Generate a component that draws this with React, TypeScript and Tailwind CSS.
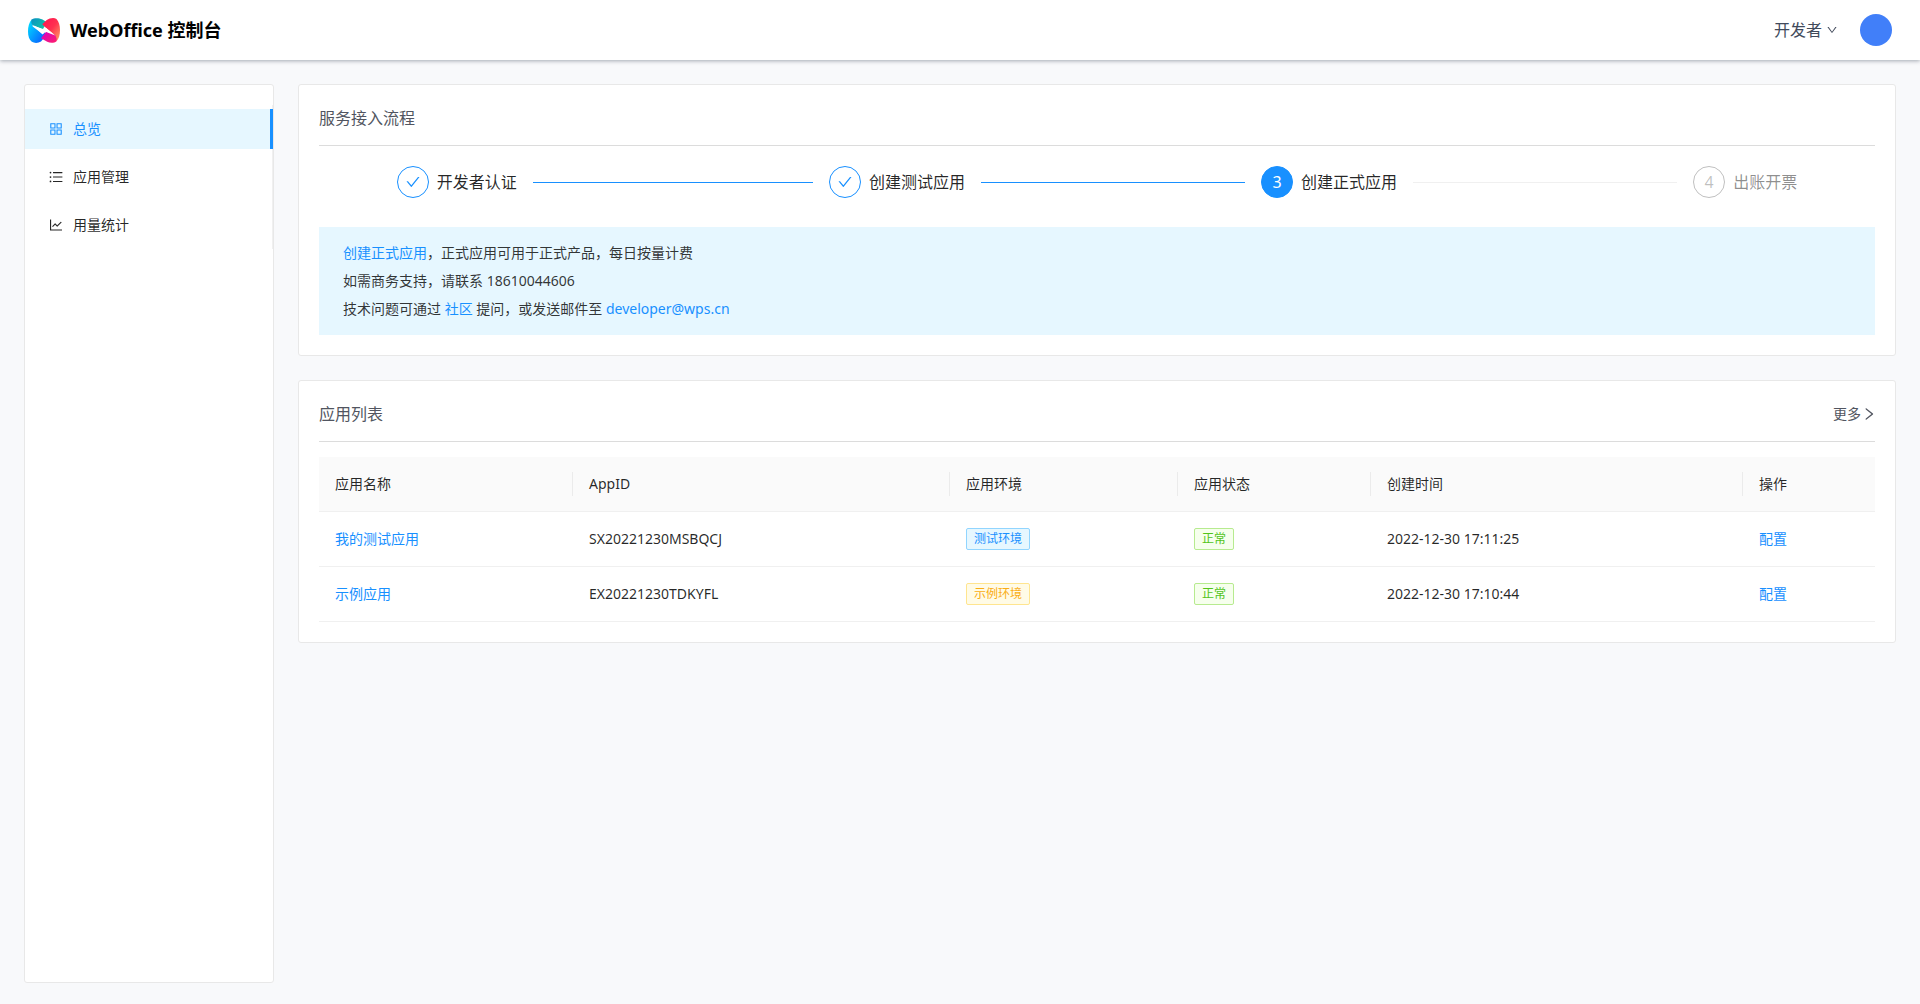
import type { ReactNode } from 'react';
import type { IconType } from 'react-icons';
import {
  AiOutlineAppstore,
  AiOutlineCheck,
  AiOutlineDown,
  AiOutlineLineChart,
  AiOutlineRight,
  AiOutlineUnorderedList,
} from 'react-icons/ai';
import { clsx } from 'clsx';

interface MenuItem {
  label: string;
  icon: IconType;
  active?: boolean;
}

interface Step {
  title: string;
  status: 'finish' | 'process' | 'wait';
}

interface AppRecord {
  name: string;
  appId: string;
  env: 'test' | 'demo';
  createdAt: string;
}

const menuItems: MenuItem[] = [
  { label: '总览', icon: AiOutlineAppstore, active: true },
  { label: '应用管理', icon: AiOutlineUnorderedList },
  { label: '用量统计', icon: AiOutlineLineChart },
];

const steps: Step[] = [
  { title: '开发者认证', status: 'finish' },
  { title: '创建测试应用', status: 'finish' },
  { title: '创建正式应用', status: 'process' },
  { title: '出账开票', status: 'wait' },
];

const columns = [
  { title: '应用名称', width: 'w-[254px]' },
  { title: 'AppID', width: 'w-[377px]' },
  { title: '应用环境', width: 'w-[228px]' },
  { title: '应用状态', width: 'w-[193px]' },
  { title: '创建时间', width: 'w-[372px]' },
  { title: '操作', width: 'w-[132px]' },
];

const apps: AppRecord[] = [
  { name: '我的测试应用', appId: 'SX20221230MSBQCJ', env: 'test', createdAt: '2022-12-30 17:11:25' },
  { name: '示例应用', appId: 'EX20221230TDKYFL', env: 'demo', createdAt: '2022-12-30 17:10:44' },
];

const tagColors = {
  blue: 'border-[#91d5ff] bg-[#e6f7ff] text-[#1890ff]',
  gold: 'border-[#ffe58f] bg-[#fffbe6] text-[#faad14]',
  green: 'border-[#b7eb8f] bg-[#f6ffed] text-[#52c41a]',
};

function Logo() {
  return (
    <svg viewBox="0 0 32 25" className="h-[25px] w-8" aria-hidden="true">
      <defs>
        <linearGradient id="logo-left" x1="0" y1="0.3" x2="0.8" y2="1">
          <stop offset="0" stopColor="#00d2ff" />
          <stop offset="1" stopColor="#0a5cff" />
        </linearGradient>
        <linearGradient id="logo-teal" x1="0" y1="0" x2="1" y2="0.6">
          <stop offset="0" stopColor="#0a8fc4" />
          <stop offset="1" stopColor="#12c2a4" />
        </linearGradient>
        <linearGradient id="logo-right" x1="0.1" y1="0" x2="1" y2="0.9">
          <stop offset="0" stopColor="#ff1450" />
          <stop offset="0.5" stopColor="#ff3150" />
          <stop offset="1" stopColor="#ff9a62" />
        </linearGradient>
        <linearGradient id="logo-pink" x1="0" y1="0" x2="1" y2="1">
          <stop offset="0" stopColor="#d400c8" />
          <stop offset="1" stopColor="#ff1e6a" />
        </linearGradient>
      </defs>
      <path
        d="M3.5 1.600C1.200 4.500 0 9 0 13.500c0 4.700 1.300 8.500 3.800 10.300 2.500 1.600 6.500 1.500 9.200-.3l5.200-6.300-1.700-3.700-2.300 2.200L4.700 8.400z"
        fill="url(#logo-left)"
      />
      <path d="M3.500 1.600C6.200-.4 11-.2 14 1.300l5 3L15 11 4.700 7.600C3.200 5.500 2.800 3.500 3.500 1.600z" fill="url(#logo-teal)" />
      <path
        d="M28.500.9C30.900 3.500 32 7.500 32 12c0 5-1.200 9-3.500 11.200L26.500 17 17.500 9.500l-3.300-3.200 4.600-4.200C21.500.1 25.900-.6 28.500.9z"
        fill="url(#logo-right)"
      />
      <path d="M18.300 13.500 26.600 16.500c1.700 2.200 2.500 4.700 1.900 6.700-2.300 2.100-6.500 2-9.300.6L13 20.200z" fill="url(#logo-pink)" />
      <path d="M4.700 7 15.400 11.800 17.600 9.600 27.200 17.600 17.600 13.800 14.600 16.600z" fill="#fff" />
    </svg>
  );
}

function Header() {
  return (
    <header className="relative flex h-[60px] items-center justify-between bg-white px-7 shadow-[0_1px_4px_rgba(0,21,41,0.35)]">
      <div className="flex items-center gap-2.5">
        <Logo />
        <h1 className="text-lg font-bold text-black">WebOffice 控制台</h1>
      </div>
      <div className="flex items-center gap-[22px]">
        <button type="button" className="flex items-center gap-1 text-base text-[#414a5b]">
          开发者
          <AiOutlineDown className="size-3" />
        </button>
        <span className="size-8 rounded-full bg-[#417ff9]" />
      </div>
    </header>
  );
}

function Sidebar() {
  return (
    <aside className="w-[250px] shrink-0 rounded-[3px] border border-[#e8e8e8] bg-white py-5">
      <nav className="flex flex-col gap-2 border-r border-[#f0f0f0] py-1">
        {menuItems.map(({ label, icon: Icon, active }) => (
          <a
            key={label}
            href="#"
            className={clsx(
              'flex h-10 items-center gap-[9px] pl-[23px] text-sm',
              active
                ? '-mr-px border-r-3 border-[#1890ff] bg-[#e6f7ff] text-[#1890ff]'
                : 'text-black/85',
            )}
          >
            <Icon className="size-4" />
            {label}
          </a>
        ))}
      </nav>
    </aside>
  );
}

function Card({ title, extra, children }: { title: string; extra?: ReactNode; children: ReactNode }) {
  return (
    <section className="rounded-[3px] border border-[#e8e8e8] bg-white p-5">
      <div className="flex items-center justify-between border-b border-[#dcdcdc] pt-px pb-[15px]">
        <h2 className="text-base text-[#515560]">{title}</h2>
        {extra}
      </div>
      {children}
    </section>
  );
}

function Steps() {
  return (
    <ol className="mx-auto mt-5 mb-[29px] flex w-[90%]">
      {steps.map(({ title, status }, index) => {
        const last = index === steps.length - 1;
        return (
          <li key={title} className={clsx('flex items-center', !last && 'flex-1 pr-4')}>
            <span
              className={clsx(
                'mr-2 flex size-8 shrink-0 items-center justify-center rounded-full border text-base',
                status === 'finish' && 'border-[#1890ff] text-[#1890ff]',
                status === 'process' && 'border-[#1890ff] bg-[#1890ff] text-white',
                status === 'wait' && 'border-black/25 text-black/25',
              )}
            >
              {status === 'finish' ? <AiOutlineCheck className="size-4" /> : index + 1}
            </span>
            <span
              className={clsx(
                'text-base whitespace-nowrap',
                status === 'wait' ? 'text-black/45' : 'text-black/85',
              )}
            >
              {title}
            </span>
            {!last && (
              <span
                className={clsx('ml-4 h-px flex-1', status === 'finish' ? 'bg-[#1890ff]' : 'bg-[#f0f0f0]')}
              />
            )}
          </li>
        );
      })}
    </ol>
  );
}

function Tag({ color, children }: { color: keyof typeof tagColors; children: ReactNode }) {
  return (
    <span
      className={clsx('inline-flex h-[22px] items-center rounded-xs border px-[7px] text-xs', tagColors[color])}
    >
      {children}
    </span>
  );
}

function Cell({ children }: { children: ReactNode }) {
  return <td className="h-[55px] border-b border-[#f0f0f0] px-4">{children}</td>;
}

function AppTable() {
  return (
    <table className="mt-[15px] w-full table-fixed border-separate border-spacing-0 text-left text-sm text-black/85">
      <thead>
        <tr>
          {columns.map(({ title, width }, index) => (
            <th key={title} className={clsx('h-[55px] border-b border-[#f0f0f0] bg-[#fafafa] font-normal', width)}>
              <div
                className={clsx(
                  'flex h-6 items-center px-4',
                  index < columns.length - 1 && 'border-r border-[#ebebeb]',
                )}
              >
                {title}
              </div>
            </th>
          ))}
        </tr>
      </thead>
      <tbody>
        {apps.map((app) => (
          <tr key={app.appId}>
            <Cell>
              <a href="#" className="text-[#1890ff]">
                {app.name}
              </a>
            </Cell>
            <Cell>{app.appId}</Cell>
            <Cell>
              <div className="flex">
                {app.env === 'test' ? <Tag color="blue">测试环境</Tag> : <Tag color="gold">示例环境</Tag>}
              </div>
            </Cell>
            <Cell>
              <div className="flex">
                <Tag color="green">正常</Tag>
              </div>
            </Cell>
            <Cell>{app.createdAt}</Cell>
            <Cell>
              <a href="#" className="text-[#1890ff]">
                配置
              </a>
            </Cell>
          </tr>
        ))}
      </tbody>
    </table>
  );
}

export default function App() {
  return (
    <div className="flex min-h-screen flex-col bg-[#f8f9fb] font-['Noto_Sans','Noto_Sans_CJK_SC',sans-serif]">
      <Header />

      <div className="flex flex-1 gap-6 px-6 pt-6 pb-[21px]">
        <Sidebar />

        {/* Main Content Area */}
        <main className="flex min-w-0 flex-1 flex-col gap-6">
          <Card title="服务接入流程">
            <Steps />
            <div className="bg-[#e6f7ff] px-6 py-3 text-sm leading-7 text-black/80">
              <p>
                <a href="#" className="text-[#1890ff]">创建正式应用</a>，正式应用可用于正式产品，每日按量计费
              </p>
              <p>如需商务支持，请联系 18610044606</p>
              <p>
                技术问题可通过 <a href="#" className="text-[#1890ff]">社区</a> 提问，或发送邮件至{' '}
                <a href="mailto:developer@wps.cn" className="text-[#1890ff]">developer@wps.cn</a>
              </p>
            </div>
          </Card>

          <Card
            title="应用列表"
            extra={
              <a href="#" className="flex items-center text-sm text-[#515560]">
                更多
                <AiOutlineRight className="-mr-0.5 size-4" />
              </a>
            }
          >
            <AppTable />
          </Card>
        </main>
      </div>
    </div>
  );
}
